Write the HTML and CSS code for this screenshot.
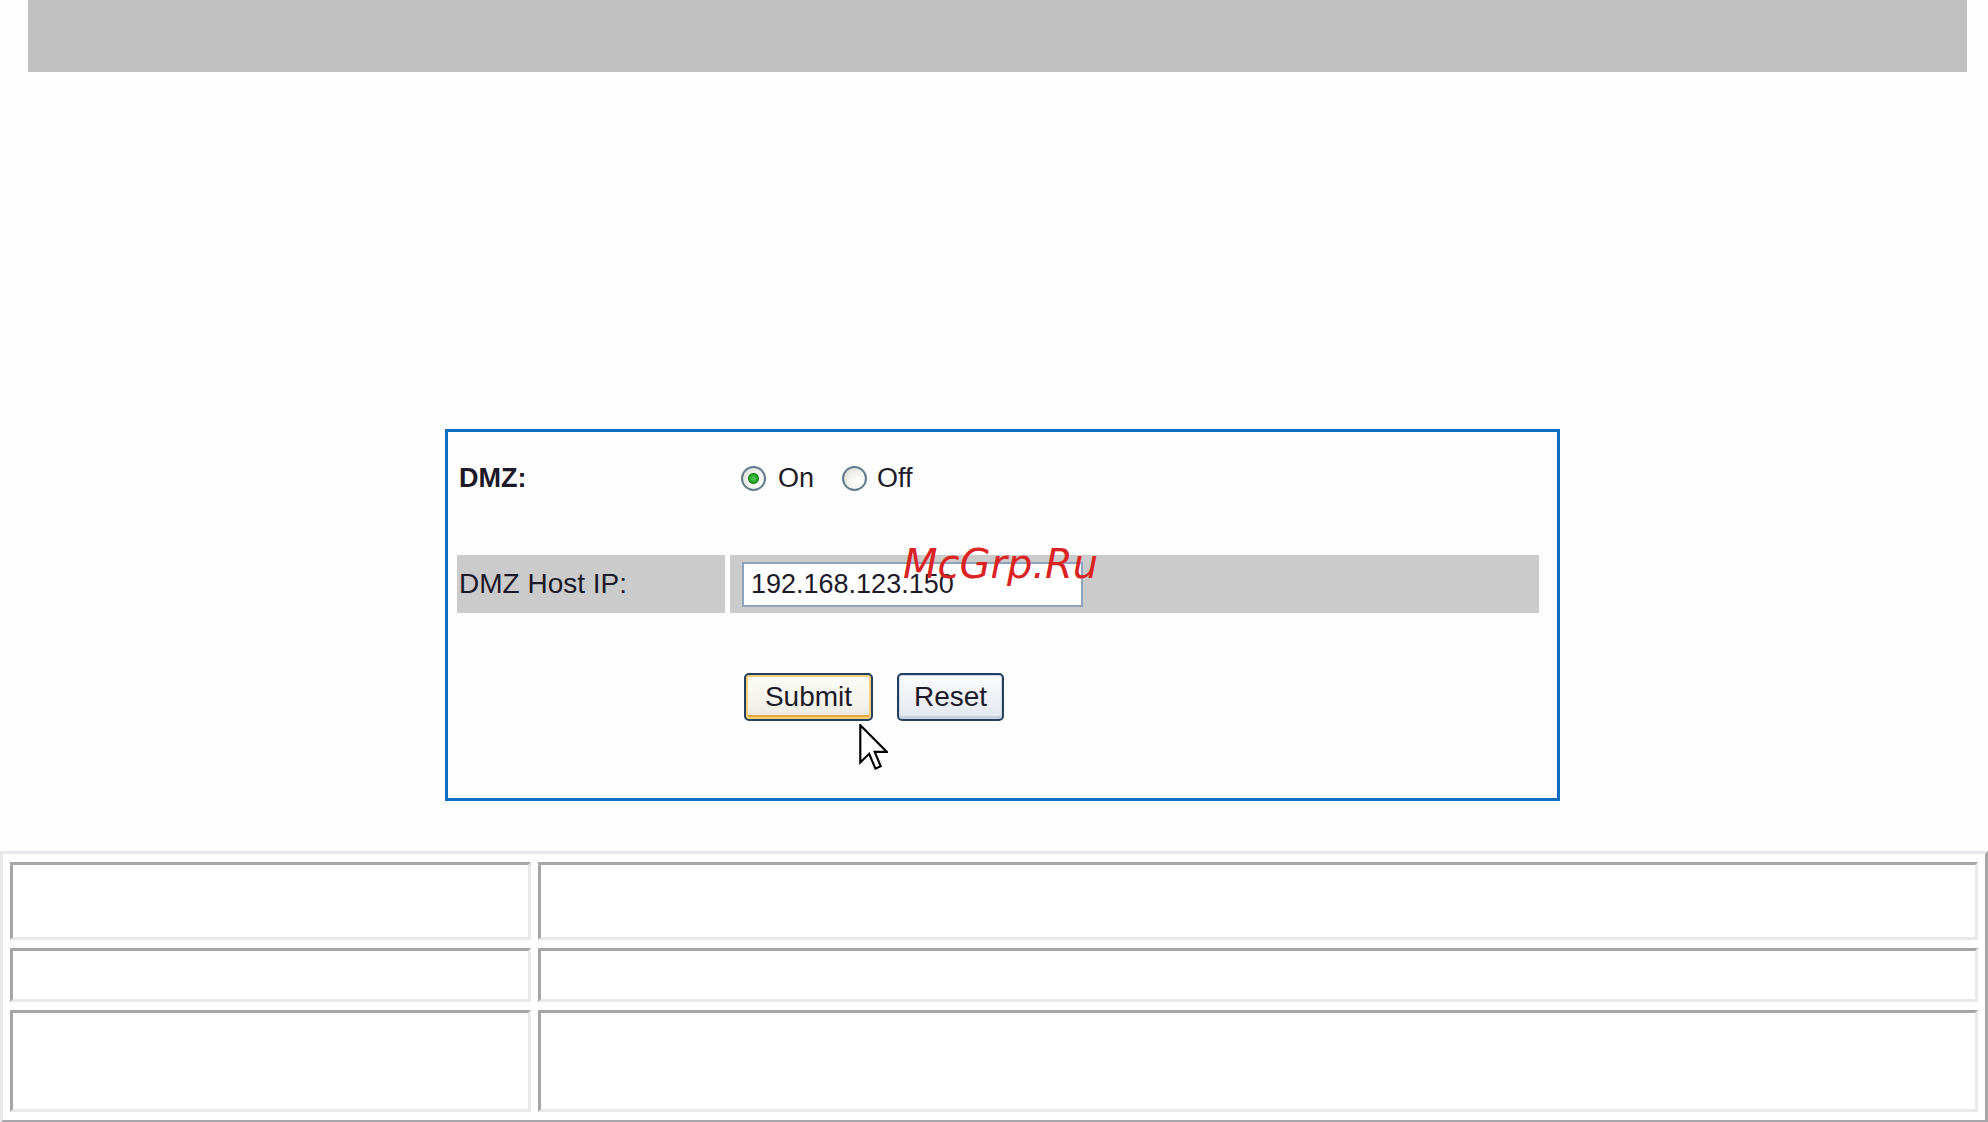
FILE: index.html
```html
<!DOCTYPE html>
<html lang="en">
<head>
  <meta charset="UTF-8">
  <title>DMZ Settings</title>
  <link rel="stylesheet" href="styles.css">
</head>
<body>
  <div class="topbar"></div>

  <!-- DMZ form panel -->
  <div class="panel">
    <form class="form" onsubmit="return false">
      <div class="label bold">DMZ:</div>
      <div class="value">
        <label class="choice"><input type="radio" name="dmz" checked>On</label>
        <label class="choice"><input type="radio" name="dmz">Off</label>
      </div>

      <div class="label shade">DMZ Host IP:</div>
      <div class="value shade">
        <input class="ip-input" type="text" value="192.168.123.150">
      </div>

      <div class="label"></div>
      <div class="value buttons">
        <button class="btn btn-submit" type="submit">Submit</button>
        <button class="btn btn-reset" type="reset">Reset</button>
      </div>
    </form>

    <div class="watermark">McGrp.Ru</div>

    <svg class="cursor" width="29" height="48" viewBox="0 0 12 20">
      <path d="M0.5 0.5 L0.5 16 L4.2 12.4 L6.8 18.6 L9 17.6 L6.5 11.6 L11.5 11.6 Z" fill="#fff" stroke="#000" stroke-width="0.9" stroke-linejoin="miter"/>
    </svg>
  </div>

  <!-- description table -->
  <table class="info">
    <tr class="r1"><td class="c1"></td><td class="c2"></td></tr>
    <tr class="r2"><td class="c1"></td><td class="c2"></td></tr>
    <tr class="r3"><td class="c1"></td><td class="c2"></td></tr>
  </table>
</body>
</html>
```

FILE: styles.css
```css
body {
  margin: 0;
  font-family: "Liberation Sans", Arial, sans-serif;
  background-color: #fefefe;
  color: #1c1a28;
}
.topbar {
  height: 72px;
  margin: 0 21px 0 28px;
  background-color: #c0c0c0;
}
.panel {
  position: relative;
  box-sizing: border-box;
  width: 1115px;
  height: 372px;
  margin: 357px 0 0 445px;
  padding: 14px 0 0 9px;
  border: 3px solid #0a6fc2;
  background-color: #fdfdfd;
}
.form {
  display: grid;
  grid-template-columns: 268px 809px;
  grid-template-rows: 64px 58px 78px;
  column-gap: 5px;
  row-gap: 45px;
}
.label {
  display: flex;
  align-items: center;
  padding-left: 2px;
  font-size: 28px;
}
.bold {
  font-weight: bold;
  font-size: 27px;
}
.value {
  display: flex;
  align-items: center;
  padding-left: 11px;
}
.shade {
  background-color: #cbcbcb;
}
.choice {
  display: flex;
  align-items: center;
  margin-right: 28px;
  font-size: 27px;
}
.choice + .choice {
  margin-left: 0;
}
.choice input {
  appearance: none;
  -webkit-appearance: none;
  box-sizing: border-box;
  width: 25px;
  height: 25px;
  margin: 0 12px 0 0;
  border: 2px solid #5f7d8c;
  border-radius: 50%;
  background: radial-gradient(circle at 65% 65%, #ffffff 0, #f2f2ee 45%, #d6d6ce 100%);
}
.choice + .choice input {
  margin-right: 10px;
}
.choice input:checked {
  background:
    radial-gradient(circle at 50% 50%, #5ad45a 0, #21a121 4px, #178017 5px, transparent 6px),
    radial-gradient(circle at 65% 65%, #ffffff 0, #f2f2ee 45%, #d6d6ce 100%);
}
.ip-input {
  box-sizing: border-box;
  width: 341px;
  height: 45px;
  margin-left: 1px;
  padding: 0 7px;
  border: 2px solid #8ea4bd;
  background-color: #fff;
  font-family: "Liberation Sans", Arial, sans-serif;
  font-size: 27px;
  color: #1c1a28;
}
.buttons {
  padding-left: 14px;
  gap: 24px;
}
.btn {
  box-sizing: border-box;
  height: 48px;
  padding: 0;
  border: 2px solid #23405e;
  border-radius: 5px;
  font-family: "Liberation Sans", Arial, sans-serif;
  font-size: 28px;
  color: #1c1a28;
  cursor: pointer;
}
.btn-submit {
  width: 129px;
  background: linear-gradient(#fdfdf9, #ecebe2);
  box-shadow: inset 0 0 0 2px #f6cf7a, inset 0 -3px 0 1px #e8a53a;
}
.btn-reset {
  width: 107px;
  background: linear-gradient(#fbfcfd, #e2e7ee);
  box-shadow: inset 0 0 0 1px #cfd9e6, inset 0 -2px 0 1px #c4cfdc;
}
.watermark {
  position: absolute;
  left: 455px;
  top: 112px;
  font-family: "DejaVu Sans", sans-serif;
  font-style: italic;
  font-size: 40px;
  line-height: 40px;
  color: #dc2323;
}
.cursor {
  position: absolute;
  left: 411px;
  top: 292px;
}
.info {
  box-sizing: border-box;
  width: 100%;
  margin-top: 50px;
  table-layout: fixed;
  border-collapse: separate;
  border-spacing: 7px 8px;
  border: 3px solid;
  border-color: #e9e8ed #a6a6a9 #a6a6a9 #e9e8ed;
  background-color: #fff;
}
.info td {
  box-sizing: border-box;
  padding: 0;
  border: 3px solid;
  border-color: #a6a6a9 #e9e8ed #e9e8ed #a6a6a9;
}
.info .c1 {
  width: 521px;
}
.r1 td {
  height: 78px;
}
.r2 td {
  height: 54px;
}
.r3 td {
  height: 102px;
}
```
